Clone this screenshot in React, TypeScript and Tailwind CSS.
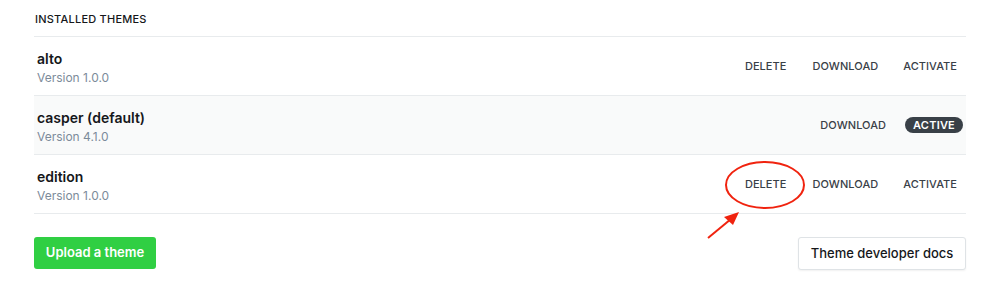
import React from "react";

type Theme = {
  name: string;
  version: string;
  active?: boolean;
};

const themes: Theme[] = [
  { name: "alto", version: "1.0.0" },
  { name: "casper (default)", version: "4.1.0", active: true },
  { name: "edition", version: "1.0.0" },
];

function ThemeRow({ theme }: { theme: Theme }) {
  return (
    <div
      className={`flex h-[59px] items-center justify-between border-b border-[#e8ebed] pl-[3px] ${
        theme.active ? "bg-[#f9fafa]" : "bg-white"
      }`}
    >
      <div className="flex flex-col pt-[2px]">
        <span className="text-[14px] leading-[19px] font-semibold text-[#15171a]">{theme.name}</span>
        <span className="mt-[1px] text-[12px] leading-[17px] text-[#7c8b9a]">Version {theme.version}</span>
      </div>
      <div className="flex items-center text-[11px] font-medium tracking-[0.005em] text-[#394047]">
        {!theme.active && <button className="mr-[26px] uppercase">Delete</button>}
        <button className={`uppercase ${theme.active ? "mr-[19px]" : "mr-[25px]"}`}>Download</button>
        {theme.active ? (
          <span className="mr-[3px] rounded-full bg-[#394047] px-[8px] py-[2px] text-[11px] leading-[12px] font-semibold tracking-[0.02em] text-white uppercase">
            Active
          </span>
        ) : (
          <button className="mr-[9px] uppercase">Activate</button>
        )}
      </div>
    </div>
  );
}

export default function App() {
  return (
    <div
      className="relative h-[283px] w-[1000px] bg-white px-[34px]"
      style={{ fontFamily: "Inter, 'Liberation Sans', sans-serif" }}
    >
      <div className="flex h-[37px] items-center border-b border-[#e8ebed] pl-px pt-[3px]">
        <h3 className="text-[11px] font-medium tracking-[0.02em] text-[#15171a] uppercase">Installed themes</h3>
      </div>
      {themes.map((t) => (
        <ThemeRow key={t.name} theme={t} />
      ))}
      <div className="mt-[23px] flex items-start justify-between">
        <button className="h-[32px] w-[122px] rounded-[3px] bg-[#30cf43] text-[13px] font-semibold text-white">
          Upload a theme
        </button>
        <button className="h-[33px] w-[168px] rounded-[3px] border border-[#dfe3e6] bg-white text-[13px] font-medium text-[#15171a] shadow-[0_1px_2px_rgba(0,0,0,0.06)]">
          Theme developer docs
        </button>
      </div>

      {/* annotation */}
      <svg className="pointer-events-none absolute inset-0" width="1000" height="283">
        <ellipse cx="765" cy="185" rx="39" ry="23" fill="none" stroke="#f0230f" strokeWidth="2" />
        <line x1="708" y1="238" x2="731" y2="219" stroke="#f0230f" strokeWidth="2" />
        <polygon points="739,212 724,217 733,225" fill="#f0230f" />
      </svg>
    </div>
  );
}
